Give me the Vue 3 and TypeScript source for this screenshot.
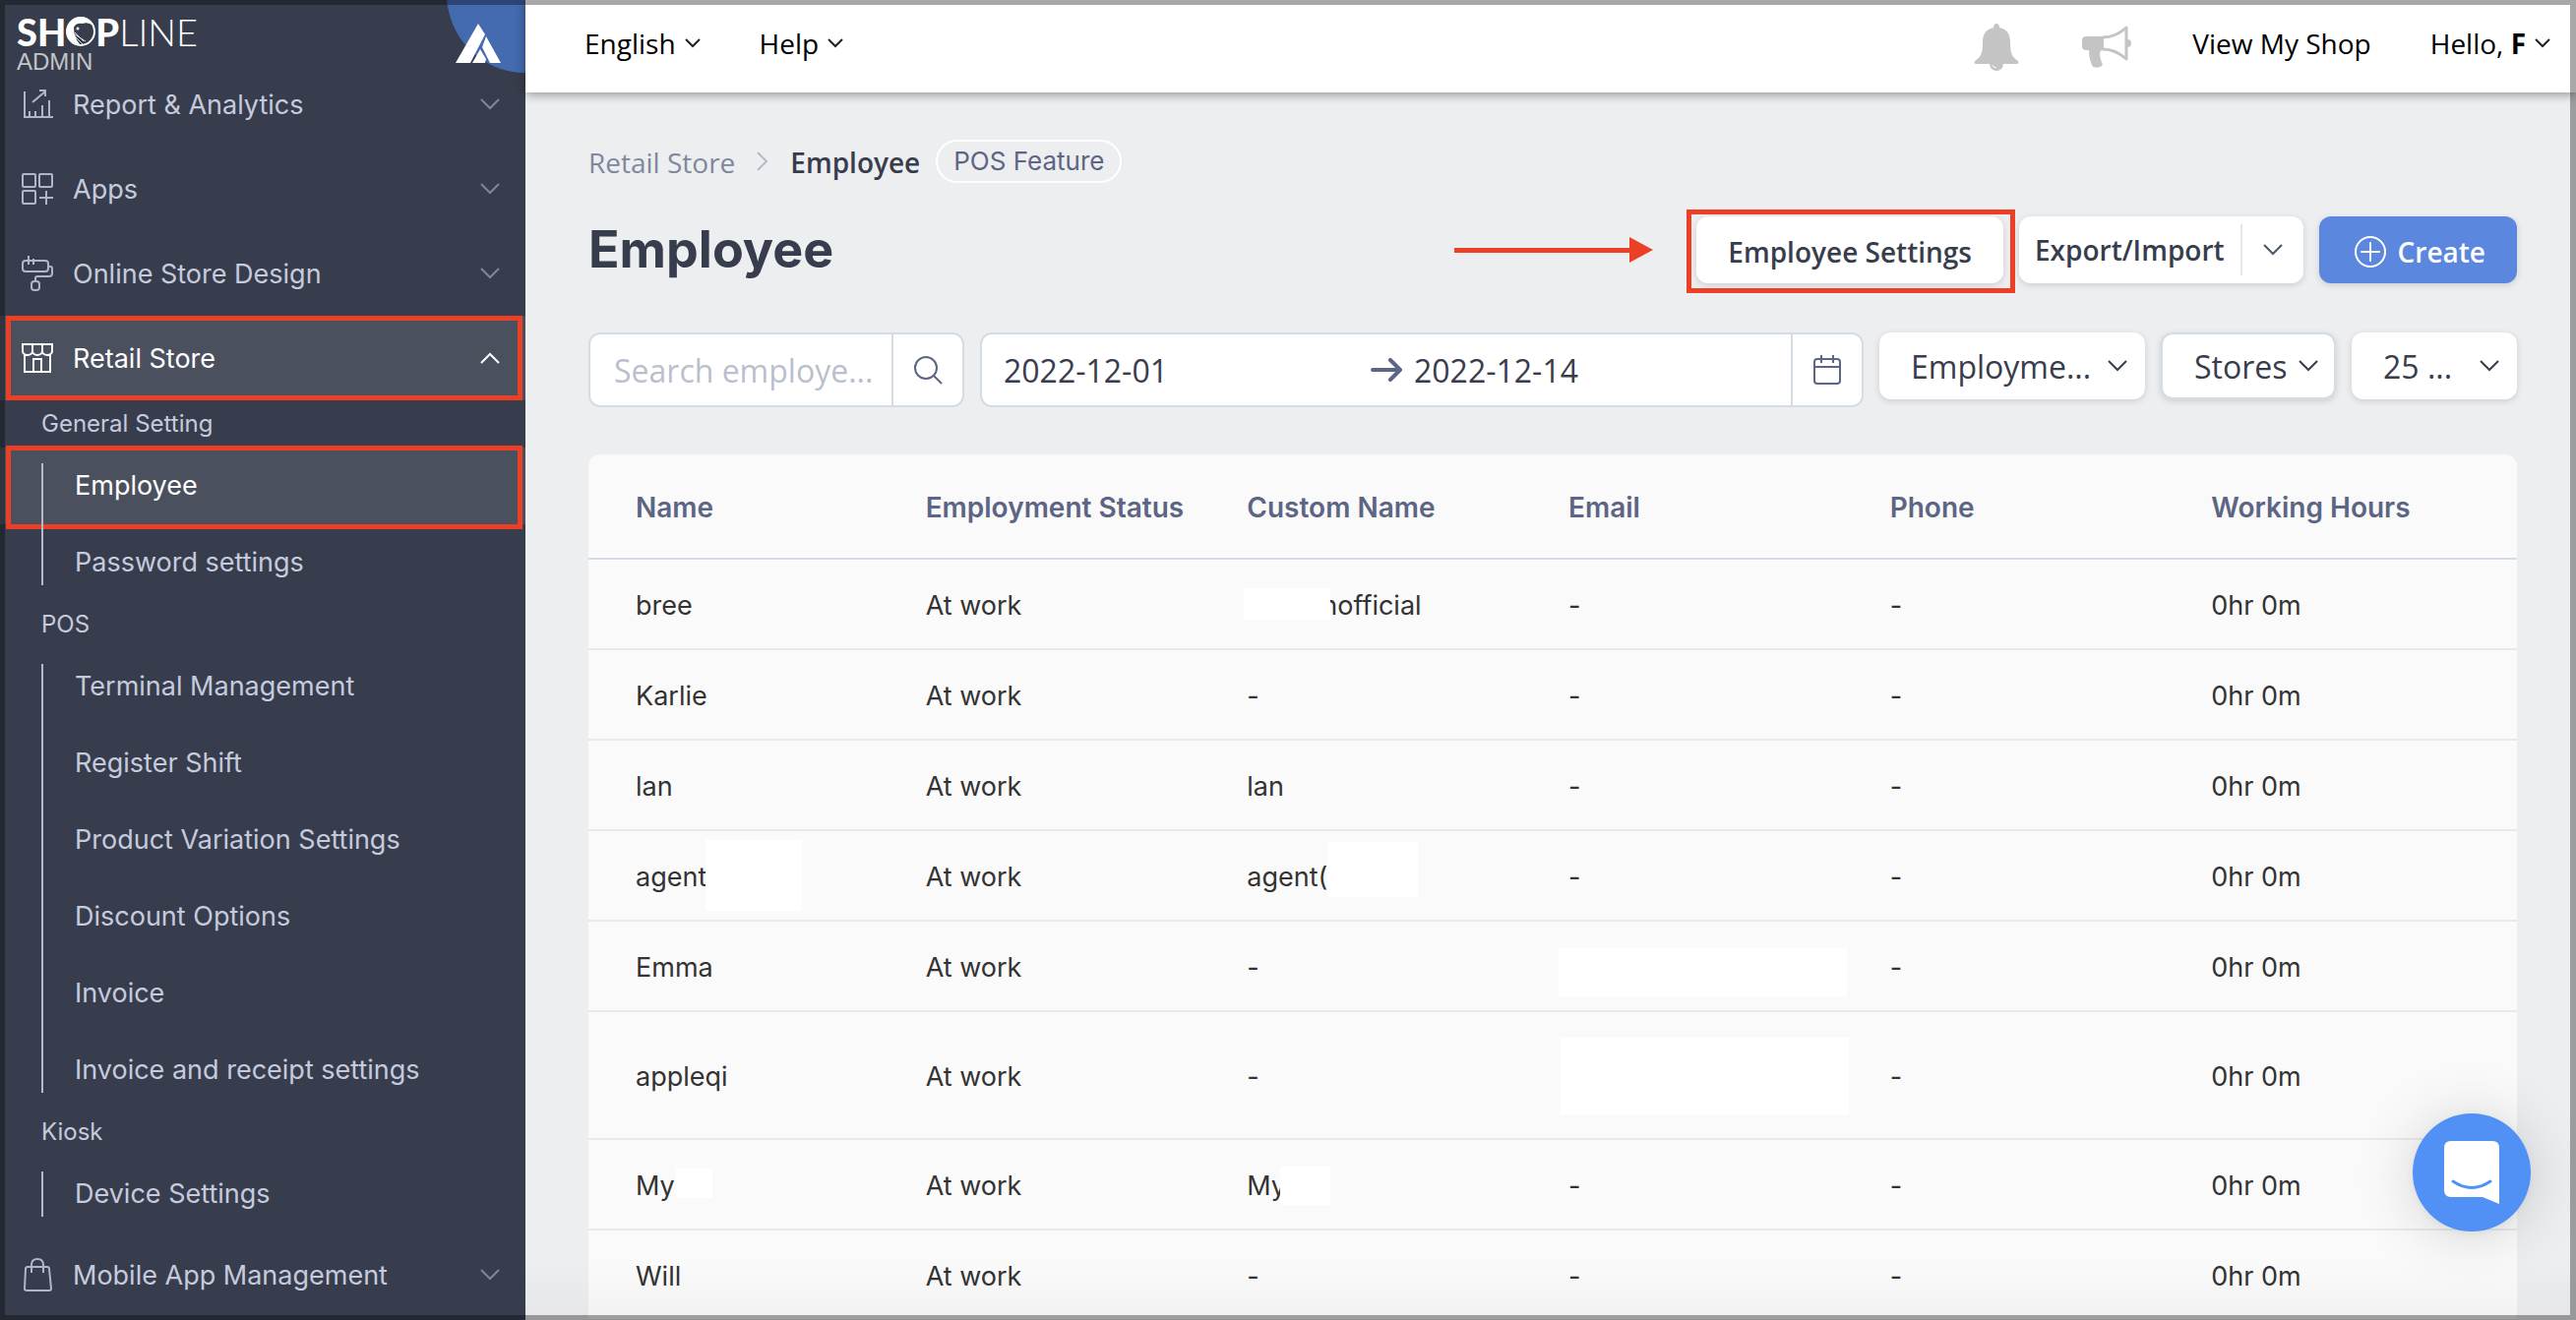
<script setup lang="ts">
import { ref } from 'vue'

interface NavEntry {
  label: string
  icon: 'report' | 'apps' | 'design' | 'store' | 'bag'
  open?: boolean
}
interface NavGroup {
  title: string
  items: string[]
}
interface Mask {
  x: number
  y: number
  w: number
  h: number
}
interface Cell {
  text: string
  mask?: Mask
  indent?: number
}
interface Row {
  cells: Cell[]
  tall?: boolean
}

const topEntries: NavEntry[] = [
  { label: 'Report & Analytics', icon: 'report' },
  { label: 'Apps', icon: 'apps' },
  { label: 'Online Store Design', icon: 'design' },
  { label: 'Retail Store', icon: 'store', open: true },
]

const groups: NavGroup[] = [
  { title: 'General Setting', items: ['Employee', 'Password settings'] },
  {
    title: 'POS',
    items: [
      'Terminal Management',
      'Register Shift',
      'Product Variation Settings',
      'Discount Options',
      'Invoice',
      'Invoice and receipt settings',
    ],
  },
  { title: 'Kiosk', items: ['Device Settings'] },
]

const columns = ['Name', 'Employment Status', 'Custom Name', 'Email', 'Phone', 'Working Hours']

const plain = (text: string): Cell => ({ text })
const row = (name: Cell, custom: Cell, email: Cell = plain('-'), tall = false): Row => ({
  cells: [name, plain('At work'), custom, email, plain('-'), plain('0hr 0m')],
  tall,
})

const rows: Row[] = [
  row(plain('bree'), { text: 'nofficial', indent: 76, mask: { x: -3, y: -2, w: 88, h: 32 } }),
  row(plain('Karlie'), plain('-')),
  row(plain('lan'), plain('lan')),
  row(
    { text: 'agent', mask: { x: 71, y: -22, w: 98, h: 72 } },
    { text: 'agent(', mask: { x: 82, y: -20, w: 92, h: 56 } },
  ),
  row(plain('Emma'), plain('-'), { text: '', mask: { x: -10, y: -4, w: 293, h: 49 } }),
  row(plain('appleqi'), plain('-'), { text: '', mask: { x: -8, y: -24, w: 293, h: 78 } }, true),
  row(
    { text: 'My', mask: { x: 41, y: -2, w: 37, h: 30 } },
    { text: 'My', mask: { x: 34, y: -4, w: 51, h: 39 } },
  ),
  row(plain('Will'), plain('-')),
]

const startDate = ref('2022-12-01')
const endDate = ref('2022-12-14')

const maskStyle = (m: Mask) => ({
  left: `${m.x}px`,
  top: `${m.y}px`,
  width: `${m.w}px`,
  height: `${m.h}px`,
})
</script>

<template>
  <div class="shell">
    <aside class="sidebar">
      <div class="brand">
        <div class="logo">
          <span class="logo-bold">SH</span>
          <svg class="logo-o" viewBox="0 0 30 30" aria-hidden="true">
            <circle cx="15" cy="15" r="14" fill="#383d4d" stroke="#fff" stroke-width="2" />
            <path d="M1 15A14 14 0 0 1 28 9Q22 5 17 7Q10 6 8 11Q8 21 14 28A14 14 0 0 1 1 15z" fill="#fff" />
            <circle cx="12" cy="12" r="1.500" fill="#fff" />
            <path d="M9 18l11 7M9 20l8 8M9 16l9 9" stroke="#fff" stroke-width=".8" />
          </svg>
          <span class="logo-bold">P</span><span class="logo-thin">LINE</span>
        </div>
        <div class="admin">ADMIN</div>
        <div class="badge" aria-hidden="true">
          <svg viewBox="0 0 46 40">
            <path d="M23 0l7 11L15 40H0z" fill="#fff" />
            <path d="M31 13L46 40H35L27 24z" fill="#fff" />
            <path d="M25 26l6 10-1 4H17z" fill="#fff" />
          </svg>
        </div>
      </div>

      <nav class="nav">
        <button
          v-for="entry in topEntries"
          :key="entry.label"
          type="button"
          class="entry"
          :class="{ open: entry.open }"
        >
          <svg class="entry-icon" viewBox="0 0 32 36" fill="none" stroke="currentColor" stroke-width="2">
            <template v-if="entry.icon === 'report'">
              <path d="M3 5v26h29M8 31v-6M14 31v-6M21 31V19M28 31V14M11 16L24 5M18 4h6v6" />
            </template>
            <template v-else-if="entry.icon === 'apps'">
              <rect x="1" y="3" width="13" height="13" rx="1" />
              <rect x="18" y="3" width="13" height="13" rx="1" />
              <rect x="1" y="20" width="13" height="13" rx="1" />
              <path d="M25 20v14M18 27h14" />
            </template>
            <template v-else-if="entry.icon === 'design'">
              <rect x="1" y="5" width="26" height="11" rx="3" />
              <path d="M7 0v9M12 3v6M27 11h2q2 0 2 2v5q0 3-3 3H16q-2 0-2 2v3" />
              <rect x="10" y="26" width="8" height="9" rx="3" />
            </template>
            <template v-else>
              <path d="M3 14v18h26V14M1 4h30v7a5 4 0 0 1-10 0a5 4 0 0 1-10 0a5 4 0 0 1-10 0zM11 4v7M21 4v7M12 32V19h8v13" />
            </template>
          </svg>
          <span class="entry-label">{{ entry.label }}</span>
          <svg class="chevron" viewBox="0 0 20 12" :class="{ up: entry.open }"><path d="M1 1l9 9 9-9" /></svg>
        </button>

        <section v-for="group in groups" :key="group.title">
          <h2 class="group-title">{{ group.title }}</h2>
          <ul class="group-list">
            <li v-for="item in group.items" :key="item">
              <a href="#" class="sub" :class="{ current: item === 'Employee' }">{{ item }}</a>
            </li>
          </ul>
        </section>

        <button type="button" class="entry">
          <svg class="entry-icon" viewBox="0 0 32 36" fill="none" stroke="currentColor" stroke-width="2">
            <path d="M6 10h20q2 0 2 2l2 20q0 2-2 2H5q-2 0-2-2l1-20q0-2 2-2zM10 16V8q0-6 6-6t6 6v8" />
          </svg>
          <span class="entry-label">Mobile App Management</span>
          <svg class="chevron" viewBox="0 0 20 12"><path d="M1 1l9 9 9-9" /></svg>
        </button>
      </nav>
    </aside>

    <div class="content">
      <header class="topbar">
        <button type="button" class="top-item">
          English<svg class="caret" viewBox="0 0 16 10"><path d="M1 1l7 7 7-7" /></svg>
        </button>
        <button type="button" class="top-item">
          Help<svg class="caret" viewBox="0 0 16 10"><path d="M1 1l7 7 7-7" /></svg>
        </button>
        <span class="spacer"></span>
        <button type="button" class="icon-button" aria-label="Notifications">
          <svg width="46" height="48" viewBox="0 0 46 48">
            <path
              d="M23 0c2 0 3 2 3 4 8 2 11 7 11 15 0 12 2 15 8 19 1 2 0 3-2 3H3c-2 0-3-1-2-3 6-4 8-7 8-19 0-8 3-13 11-15 0-2 1-4 3-4z"
              fill="#c4c4c4"
            />
            <path d="M16 41a7 7 0 0 0 14 0z" fill="#c4c4c4" />
            <path d="M19 42q1 3 4 3" fill="none" stroke="#fff" stroke-width="1" />
          </svg>
        </button>
        <button type="button" class="icon-button" aria-label="Announcements">
          <svg width="50" height="44" viewBox="0 0 50 44">
            <path d="M4 11h18v14h-1q-3 0-3 4t3 11q-3 4-10 2-4-7-4-17H4q-4 0-4-4v-6q0-4 4-4z" fill="#c4c4c4" />
            <path d="M21 12Q34 12 45 2v32Q34 24 21 24" fill="none" stroke="#c4c4c4" stroke-width="3" stroke-linejoin="round" />
            <path d="M46 14q4 0 4 4t-4 4z" fill="#c4c4c4" />
          </svg>
        </button>
        <a href="#" class="top-item">View My Shop</a>
        <button type="button" class="top-item">
          Hello,&nbsp;<b>F</b><svg class="caret" viewBox="0 0 16 10"><path d="M1 1l7 7 7-7" /></svg>
        </button>
      </header>

      <main class="main">
        <nav class="crumbs" aria-label="Breadcrumb">
          <a href="#">Retail Store</a>
          <svg class="crumb-sep" viewBox="0 0 12 20"><path d="M1 1l9 9-9 9" /></svg>
          <strong>Employee</strong>
          <span class="pill">POS Feature</span>
        </nav>

        <div class="title-row">
          <h1>Employee</h1>
          <svg class="pointer" viewBox="0 0 202 26" aria-hidden="true">
            <path d="M0 11h178V0l24 13-24 13V16H0z" fill="#eb4026" />
          </svg>
          <button type="button" class="btn settings">Employee Settings</button>
          <div class="split">
            <button type="button" class="btn-plain">Export/Import</button>
            <button type="button" class="split-caret" aria-label="More export and import actions">
              <svg class="chevron" viewBox="0 0 20 12"><path d="M1 1l9 9 9-9" /></svg>
            </button>
          </div>
          <button type="button" class="btn create">
            <svg width="32" height="32" viewBox="0 0 32 32" fill="none" stroke="#fff" stroke-width="2">
              <circle cx="16" cy="16" r="15" />
              <path d="M16 7v18M7 16h18" stroke-linecap="round" />
            </svg>
            Create
          </button>
        </div>

        <div class="filters">
          <div class="field search">
            <input type="text" placeholder="Search employe..." aria-label="Search employee" />
            <button type="button" class="field-button" aria-label="Search">
              <svg width="30" height="30" viewBox="0 0 30 30" fill="none" stroke="#5c6584" stroke-width="2">
                <circle cx="13" cy="13" r="11" />
                <path d="M21 21l8 8" />
              </svg>
            </button>
          </div>
          <div class="field range">
            <input v-model="startDate" type="text" aria-label="Start date" />
            <svg class="range-arrow" viewBox="0 0 32 24"><path d="M2 12h28M20 2l10 10-10 10" /></svg>
            <input v-model="endDate" type="text" aria-label="End date" />
            <button type="button" class="field-button" aria-label="Open calendar">
              <svg width="28" height="30" viewBox="0 0 28 30" fill="none" stroke="#5c6584" stroke-width="2">
                <rect x="1" y="4" width="26" height="25" rx="3" />
                <path d="M1 12h26M8 0v8M20 0v8" />
              </svg>
            </button>
          </div>
          <div class="drop drop-status">
            <select aria-label="Employment status"><option>Employme...</option></select>
            <svg class="chevron" viewBox="0 0 20 12"><path d="M1 1l9 9 9-9" /></svg>
          </div>
          <div class="drop drop-stores">
            <select aria-label="Stores"><option>Stores</option></select>
            <svg class="chevron" viewBox="0 0 20 12"><path d="M1 1l9 9 9-9" /></svg>
          </div>
          <div class="drop drop-size">
            <select aria-label="Rows per page"><option>25 ...</option></select>
            <svg class="chevron" viewBox="0 0 20 12"><path d="M1 1l9 9 9-9" /></svg>
          </div>
        </div>

        <table class="grid">
          <thead>
            <tr>
              <th v-for="column in columns" :key="column" scope="col">{{ column }}</th>
            </tr>
          </thead>
          <tbody>
            <tr v-for="(r, i) in rows" :key="i" :class="{ tall: r.tall }">
              <td v-for="(cell, j) in r.cells" :key="j">
                <div class="cell" :style="cell.indent ? { paddingLeft: `${cell.indent}px` } : undefined">
                  {{ cell.text }}<span v-if="cell.mask" class="mask" :style="maskStyle(cell.mask)"></span>
                </div>
              </td>
            </tr>
          </tbody>
        </table>
      </main>
    </div>

    <button type="button" class="chat" aria-label="Open chat">
      <svg width="56" height="64" viewBox="0 0 56 64">
        <path d="M7 0h42q7 0 7 7v57l-17-7H7q-7 0-7-7V7q0-7 7-7z" fill="#fff" />
        <path d="M9 41q19 13 38 0" fill="none" stroke="#5191f5" stroke-width="3" stroke-linecap="round" />
      </svg>
    </button>
    <div class="shade"></div>
    <div class="frame"></div>
  </div>
</template>

<style>
html,
body {
  margin: 0;
}
</style>

<style scoped>
.shell {
  --ui: Inter, 'Liberation Sans', sans-serif;
  --body: 'Open Sans', 'Noto Sans', sans-serif;
  display: flex;
  height: 100vh;
  overflow: hidden;
  background: #edeef0;
  font-family: var(--ui);
  color: #383d4d;
}
.shell * {
  box-sizing: border-box;
}
button,
input,
select {
  margin: 0;
  padding: 0;
  border: 0;
  background: none;
  color: inherit;
  font: inherit;
  outline: 0;
}
a {
  color: inherit;
  text-decoration: none;
}
svg {
  display: block;
  flex: none;
}

/* Sidebar */
.sidebar {
  flex: none;
  width: 534px;
  overflow: hidden;
  background: #383d4d;
  color: #c5cbdd;
}
.brand {
  position: relative;
  height: 63px;
  padding: 12px 0 0 17px;
}
.logo {
  display: flex;
  align-items: center;
  height: 39px;
  color: #fff;
  font-family: Lato, sans-serif;
  font-size: 38px;
  line-height: 38px;
}
.logo-bold {
  font-weight: 900;
}
.logo-thin {
  font-weight: 300;
}
.logo-o {
  width: 30px;
  height: 30px;
}
.admin {
  color: #c3c4c8;
  font: 24px/24px 'Liberation Sans', sans-serif;
}
.badge {
  position: absolute;
  top: -86px;
  right: -80px;
  width: 160px;
  height: 160px;
  border-radius: 50%;
  background: #446ab0;
}
.badge svg {
  position: absolute;
  left: 9px;
  bottom: 10px;
  width: 46px;
  height: 40px;
}
.entry {
  position: relative;
  display: flex;
  align-items: center;
  width: 100%;
  height: 86px;
  padding: 0 26px 0 22px;
  text-align: left;
}
.entry-icon {
  width: 32px;
  height: 36px;
  margin-right: 20px;
  opacity: 0.85;
}
.entry-label {
  flex: 1;
  padding-top: 2px;
  font-size: 27px;
  line-height: 36px;
}
.entry .chevron {
  stroke: #7d869c;
}
.entry.open {
  background: #4b505e;
  color: #fff;
}
.entry.open .entry-icon {
  opacity: 1;
}
.entry.open .chevron {
  stroke: #fff;
}
.chevron {
  width: 20px;
  height: 12px;
  fill: none;
  stroke: #4c546b;
  stroke-width: 2;
}
.chevron.up {
  transform: rotate(180deg);
}
.entry.open::after,
.sub.current::after {
  content: '';
  position: absolute;
  inset: 0 3px 0 6px;
  border: 5px solid #eb4026;
}
.group-title {
  margin: 0;
  padding-left: 42px;
  font-size: 24px;
  font-weight: 400;
  line-height: 48px;
}
.group-list {
  position: relative;
  margin: 0;
  padding: 0;
  list-style: none;
}
.group-list::before {
  content: '';
  position: absolute;
  z-index: 1;
  inset: 16px auto 16px 42px;
  width: 2px;
  background: #b4bac9;
}
.sub {
  position: relative;
  display: block;
  padding-left: 76px;
  font-size: 27px;
  line-height: 78px;
}
.sub.current {
  background: #4b505e;
  color: #fff;
}
.sub.current::after {
  inset: -2px 3px -5px 6px;
}

/* Top bar */
.content {
  flex: 1;
  min-width: 0;
}
.topbar {
  position: relative;
  display: flex;
  align-items: center;
  height: 94px;
  padding: 0 26px 6px 60px;
  background: #fff;
  box-shadow: 0 2px 10px rgba(0, 0, 0, 0.4);
  color: #000;
  font-family: var(--body);
  font-size: 28px;
  line-height: 40px;
}
.top-item {
  display: flex;
  align-items: center;
}
.top-item + .top-item {
  margin-left: 60px;
}
.caret {
  width: 16px;
  height: 10px;
  margin-left: 9px;
  fill: none;
  stroke: #222;
  stroke-width: 2;
}
.spacer {
  flex: 1;
}
.icon-button {
  margin: 8px 62px 0 2px;
}

/* Page */
.main {
  padding: 46px 60px 0 64px;
}
.crumbs {
  display: flex;
  align-items: center;
  height: 48px;
  font-family: var(--body);
  font-size: 28px;
  color: #7f889c;
}
.crumbs a,
.crumbs strong {
  padding-top: 2px;
}
.crumbs strong {
  color: #383d4d;
  font-weight: 600;
}
.crumb-sep {
  width: 12px;
  height: 20px;
  margin: 0 22px;
  fill: none;
  stroke: #b4bac9;
  stroke-width: 2;
}
.pill {
  margin-left: 16px;
  padding: 0 16px;
  border: 2px solid #fff;
  border-radius: 22px;
  color: #5c6584;
  font-family: var(--ui);
  font-size: 26px;
  line-height: 40px;
}
.title-row {
  display: flex;
  align-items: center;
  gap: 16px;
  margin-top: 32px;
}
h1 {
  flex: 1;
  margin: 0;
  font-size: 52px;
  font-weight: 700;
  line-height: 68px;
}
.pointer {
  width: 202px;
  height: 26px;
  margin-right: 28px;
}
.btn,
.split {
  display: flex;
  align-items: center;
  height: 68px;
  border-radius: 12px;
  background: #fff;
  box-shadow: 0 2px 6px rgba(56, 61, 77, 0.18);
  font-family: var(--body);
  font-size: 28px;
  font-weight: 600;
}
.settings {
  position: relative;
  padding: 3px 32px 0;
}
.settings::after {
  content: '';
  position: absolute;
  inset: -7px -12px -10px -10px;
  border: 5px solid #eb4026;
}
.btn-plain {
  padding: 0 16px;
}
.split-caret {
  display: flex;
  align-items: center;
  height: 52px;
  padding: 0 21px;
  border-left: 2px solid #e3e6ea;
}
.create {
  gap: 12px;
  padding: 3px 32px 0 36px;
  background: #5b87de;
  color: #fff;
}

/* Filters */
.filters {
  display: flex;
  align-items: flex-start;
  gap: 16px;
  margin-top: 50px;
  font-family: var(--body);
  font-size: 32px;
}
.field {
  display: flex;
  align-items: center;
  height: 76px;
  border: 2px solid #d4dde5;
  border-radius: 12px;
  background: #fff;
}
.field input {
  flex: 1 1 0;
  width: 0;
  min-width: 0;
  height: 72px;
}
.field input::placeholder {
  color: #b9bfcd;
  opacity: 1;
}
.search {
  flex: none;
  width: 382px;
  padding-left: 24px;
}
.range {
  flex: 1 1 0;
  min-width: 0;
  padding-left: 22px;
}
.range-arrow {
  width: 32px;
  height: 24px;
  margin: 0 12px 0 -10px;
  fill: none;
  stroke: #5c6584;
  stroke-width: 4;
  stroke-linecap: round;
  stroke-linejoin: round;
}
.field-button {
  display: flex;
  flex: none;
  align-items: center;
  justify-content: center;
  width: 72px;
  height: 72px;
  border-left: 2px solid #d4dde5;
}
.drop {
  position: relative;
  flex: none;
  height: 68px;
  border-radius: 12px;
  background: #fff;
  box-shadow: 0 2px 6px rgba(56, 61, 77, 0.18);
}
.drop select {
  width: 100%;
  height: 100%;
  padding-left: 32px;
  appearance: none;
}
.drop .chevron {
  position: absolute;
  top: 28px;
  right: 18px;
  stroke: #383d4d;
  pointer-events: none;
}
.drop-status {
  width: 270px;
}
.drop-stores {
  width: 178px;
  border: 2px solid #d4dde5;
}
.drop-stores .chevron {
  top: 26px;
  right: 16px;
}
.drop-size {
  width: 168px;
}

/* Table */
.grid {
  width: 100%;
  margin-top: 48px;
  border-spacing: 0;
  table-layout: fixed;
  border-radius: 12px 12px 0 0;
  background: #fafafb;
  color: #333;
  font-size: 27px;
  line-height: 32px;
  text-align: left;
}
th {
  height: 107px;
  padding: 2px 0 0 16px;
  border-bottom: 2px solid #d4dde5;
  color: #5c6584;
  font-size: 28px;
  font-weight: 600;
}
td {
  height: 92px;
  padding: 3px 0 0 16px;
  border-bottom: 2px solid #e6eaee;
}
th:first-child,
td:first-child {
  padding-left: 48px;
}
.tall td {
  height: 130px;
}
.cell {
  position: relative;
  min-height: 32px;
}
.mask {
  position: absolute;
  background: #fff;
}

/* Overlays */
.chat {
  position: fixed;
  right: 46px;
  bottom: 90px;
  display: flex;
  align-items: center;
  justify-content: center;
  width: 120px;
  height: 120px;
  border-radius: 50%;
  background: #5191f5;
  box-shadow: 0 2px 12px rgba(0, 0, 0, 0.06), 0 4px 64px rgba(0, 0, 0, 0.16);
}
.shade {
  position: fixed;
  inset: auto 0 0 534px;
  height: 60px;
  background: linear-gradient(transparent, rgba(0, 0, 0, 0.03));
  pointer-events: none;
}
.frame {
  position: fixed;
  inset: 0;
  border: 5px solid rgba(0, 0, 0, 0.34);
  border-right-width: 6px;
  pointer-events: none;
}
</style>
